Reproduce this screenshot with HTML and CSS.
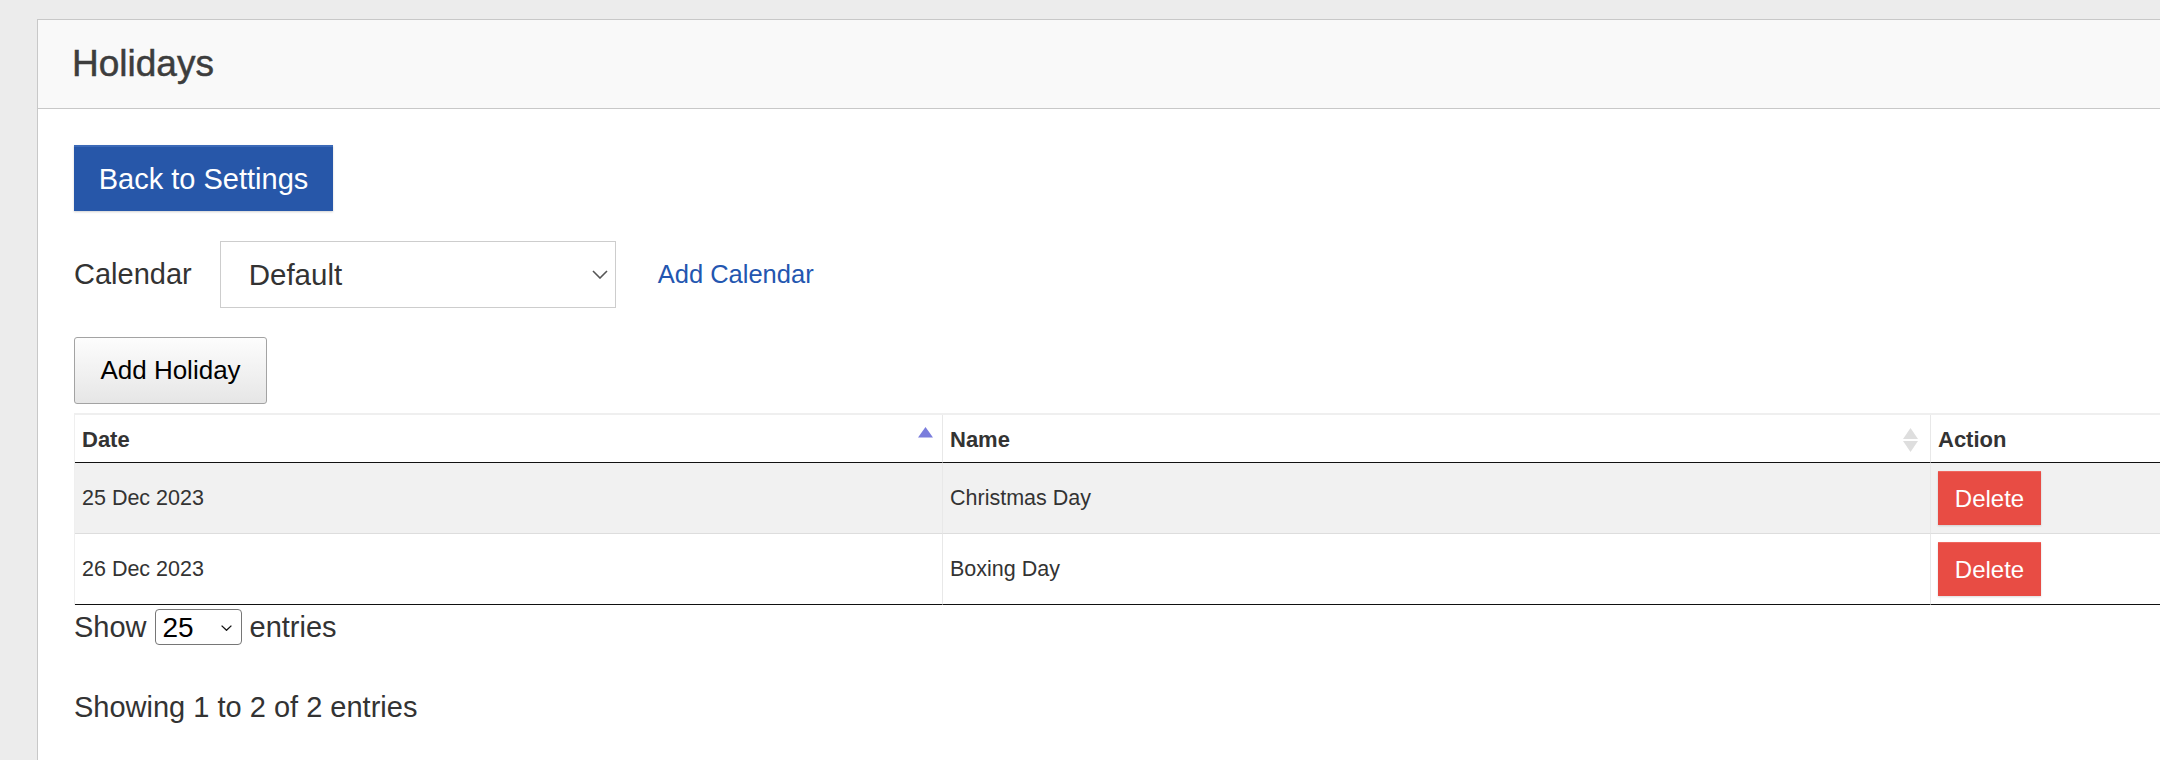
FILE: index.html
```html
<!DOCTYPE html>
<html lang="en">
<head>
<meta charset="utf-8">
<title>Holidays</title>
<link rel="stylesheet" href="styles.css">
</head>
<body>
<div class="panel">
  <div class="panel-header">
    <h1 class="panel-title">Holidays</h1>
  </div>
  <div class="panel-body">
    <a class="btn btn-primary" href="#">Back to Settings</a>

    <div class="calendar-row">
      <label class="field-label" for="cal">Calendar</label>
      <div class="select-wrap select-wrap-lg">
        <select id="cal" class="select-lg"><option>Default</option></select>
        <svg class="chev chev-lg" width="16" height="9" viewBox="0 0 16 9"><path d="M1 1 L8 8 L15 1" fill="none" stroke="#555" stroke-width="1.6"/></svg>
      </div>
      <a class="link" href="#">Add Calendar</a>
    </div>

    <button class="btn btn-default" type="button">Add Holiday</button>

    <table class="data-table">
      <thead>
        <tr>
          <th class="col-date"><div class="th-inner"><span>Date</span><svg class="sort-icon" width="15" height="11" viewBox="0 0 15 11"><polygon points="7.5,0 15,10.5 0,10.5" fill="#7a7ddc"/></svg></div></th>
          <th class="col-name"><div class="th-inner"><span>Name</span><svg class="sort-icon sort-both" width="15" height="25" viewBox="0 0 15 25"><polygon points="7.5,1 15,12 0,12" fill="#dedede"/><polygon points="0,14 15,14 7.5,25" fill="#dedede"/></svg></div></th>
          <th class="col-action"><div class="th-inner"><span>Action</span></div></th>
        </tr>
      </thead>
      <tbody>
        <tr class="row-odd">
          <td>25 Dec 2023</td>
          <td>Christmas Day</td>
          <td><button class="btn btn-danger" type="button">Delete</button></td>
        </tr>
        <tr class="row-even">
          <td>26 Dec 2023</td>
          <td>Boxing Day</td>
          <td><button class="btn btn-danger" type="button">Delete</button></td>
        </tr>
      </tbody>
    </table>

    <div class="length-row">
      <span>Show</span>
      <div class="select-wrap select-wrap-sm">
        <select class="select-sm"><option>25</option></select>
        <svg class="chev chev-sm" width="11" height="6" viewBox="0 0 11 6"><path d="M0.6 0.6 L5.5 5.3 L10.4 0.6" fill="none" stroke="#111" stroke-width="1.3"/></svg>
      </div>
      <span>entries</span>
    </div>

    <div class="info">Showing 1 to 2 of 2 entries</div>
  </div>
</div>
</body>
</html>
```

FILE: styles.css
```css
html, body {
  margin: 0;
  padding: 0;
}

body {
  background: #ececec;
  font-family: "Liberation Sans", Arial, Helvetica, sans-serif;
  overflow: hidden;
  height: 760px;
}

.panel {
  margin: 19px 0 0 37px;
  width: 2240px;
  height: 760px;
  background: #ffffff;
  border-top: 1px solid #c8c8c8;
  border-left: 1px solid #c8c8c8;
}

.panel-header {
  height: 88px;
  background: #f9f9f9;
  border-bottom: 1px solid #c8c8c8;
  padding-left: 34px;
}

.panel-title {
  margin: 0;
  font-size: 37px;
  font-weight: normal;
  line-height: 88px;
  color: #3d3d3d;
  -webkit-text-stroke: 0.5px #3d3d3d;
}

.panel-body {
  padding: 36px 0 0 36px;
}

.btn {
  font-family: inherit;
  box-sizing: border-box;
  text-align: center;
  text-decoration: none;
  cursor: pointer;
}

.btn-primary {
  display: block;
  width: 259px;
  height: 66px;
  line-height: 64px;
  font-size: 29px;
  color: #ffffff;
  background: #2757a9;
  border-top: 2px solid #3c6ab8;
  box-shadow: 0 1px 2px rgba(0, 0, 0, 0.18);
}

.calendar-row {
  display: flex;
  align-items: center;
  margin-top: 30px;
  height: 67px;
}

.field-label {
  font-size: 29px;
  color: #333333;
  margin-right: 28px;
}

.select-wrap {
  position: relative;
}

.select-lg {
  appearance: none;
  -webkit-appearance: none;
  box-sizing: border-box;
  width: 396px;
  height: 67px;
  border: 1px solid #cdcdcd;
  border-radius: 0;
  background: #ffffff;
  padding: 0 0 0 28px;
  font-family: inherit;
  font-size: 29.5px;
  color: #333333;
}

.chev {
  position: absolute;
  pointer-events: none;
}

.chev-lg {
  right: 8px;
  top: 29px;
}

.link {
  margin-left: 42px;
  font-size: 25.5px;
  color: #2356b0;
  text-decoration: none;
}

.btn-default {
  display: block;
  margin-top: 29px;
  width: 193px;
  height: 67px;
  padding: 0;
  font-size: 26px;
  color: #000000;
  background: linear-gradient(#fdfdfd, #e6e6e6);
  border: 1px solid #a3a3a3;
  border-radius: 3px;
}

.data-table {
  margin-top: 9px;
  border-collapse: separate;
  border-spacing: 0;
  table-layout: fixed;
  width: 2157px;
  border-top: 2px solid #efefef;
  border-left: 1px solid #efefef;
}

.data-table th,
.data-table td {
  box-sizing: border-box;
  border-right: 1px solid #e8e8e8;
  text-align: left;
}

.col-date { width: 868px; }
.col-name { width: 988px; }
.col-action { width: 301px; }

.data-table th {
  padding: 12px 9px 10px 7px;
  font-size: 22px;
  font-weight: bold;
  line-height: 25px;
  color: #333333;
  border-bottom: 1px solid #111111;
}

.th-inner {
  display: flex;
  justify-content: space-between;
  align-items: flex-start;
  height: 25px;
}

.sort-both {
  margin-right: 3px;
}

.data-table td {
  height: 71px;
  padding: 0 7px;
  vertical-align: middle;
  font-size: 21.5px;
  line-height: 24px;
  color: #333333;
}

.row-odd td {
  background: #f1f1f1;
  border-bottom: 1px solid #dddddd;
}

.row-even td {
  background: #ffffff;
  border-bottom: 1px solid #111111;
}

.btn-danger {
  display: block;
  width: 103px;
  height: 54px;
  padding: 0;
  font-size: 24px;
  color: #ffffff;
  background: #e84c44;
  border: none;
  border-top: 1px solid #f0665e;
  box-shadow: 0 1px 2px rgba(0, 0, 0, 0.15);
}

.length-row {
  display: flex;
  align-items: center;
  gap: 8px;
  margin-top: 4px;
  font-size: 29px;
  color: #333333;
}

.select-sm {
  appearance: none;
  -webkit-appearance: none;
  box-sizing: border-box;
  width: 87px;
  height: 36px;
  border: 1px solid #767676;
  border-radius: 4px;
  background: #ffffff;
  padding: 0 0 0 7px;
  font-family: inherit;
  font-size: 28px;
  color: #000000;
}

.chev-sm {
  right: 10px;
  top: 16px;
}

.info {
  margin-top: 46px;
  font-size: 29px;
  color: #333333;
}
```
